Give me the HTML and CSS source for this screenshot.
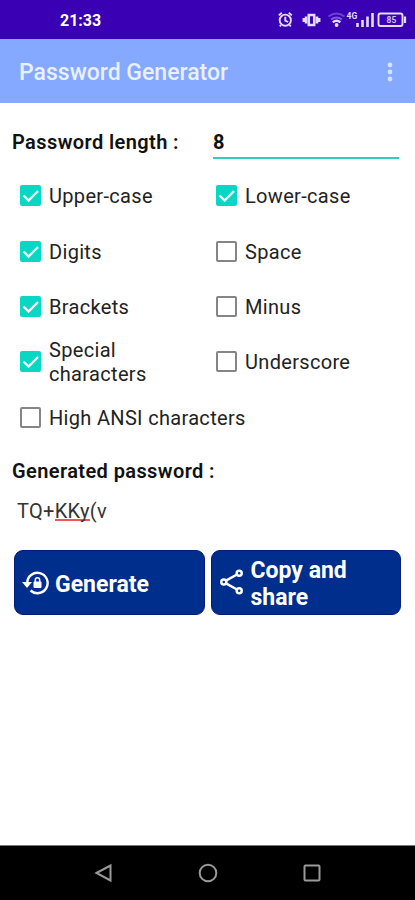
FILE: index.html
```html
<!DOCTYPE html>
<html lang="en">
<head>
<meta charset="utf-8">
<title>Password Generator</title>
<link rel="stylesheet" href="styles.css">
</head>
<body>
<div class="screen">
  <div class="status">
    <span class="clock">21:33</span>
    <svg class="status-icons" width="142" height="24" viewBox="0 0 142 24" fill="none" stroke="#e4dcff" stroke-width="1.9">
      <circle cx="12.300" cy="12.200" r="5.600"/><path d="M12.300 8.800v3.800l2.800 1.400M5.800 7.400l3-2.600M18.800 7.400l-3-2.600M8 17l-1.200 1.400M16.600 17l1.200 1.400"/>
      <path d="M35.800 7h5.400v10h-5.400zM33 8.500v7M44 8.500v7M30.800 10v4M46.200 10v4" stroke-width="2.500"/>
      <path d="M55.500 8.500q8-6 16 0" stroke="#6b42cf"/><path d="M58 11.400q5.500-3.800 11 0" stroke="#7c59d6"/><path d="M59.800 14.200q3.700-2.800 7.600 0" stroke-width="2.400"/><circle cx="63.600" cy="17" r="1.900" fill="#e4dcff" stroke="none"/>
      <text class="network" x="73.500" y="10.500">4G</text>
      <path d="M84.500 19v-4M89.500 19v-7M94.500 19V8.500M99.500 19V5" stroke-width="2.600"/>
      <rect x="105.500" y="5.500" width="24" height="12.500" rx="2"/><path d="M132 8.500v6.500" stroke-width="2.200"/>
      <text class="charge" x="113.500" y="15">85</text>
    </svg>
  </div>
  <header class="appbar">
    <h1>Password Generator</h1>
    <svg width="6" height="20" viewBox="0 0 6 20" fill="#d3e1ff"><circle cx="3" cy="3" r="2.400"/><circle cx="3" cy="10" r="2.400"/><circle cx="3" cy="17" r="2.400"/></svg>
  </header>
  <main>
    <div class="length"><span class="label">Password length :</span><span class="field">8</span></div>
    <div class="options">
      <div class="option"><i class="box on"><svg viewBox="0 0 21 21"><path d="M3.500 10.500l5 5L18 6"/></svg></i><span>Upper-case</span></div>
      <div class="option"><i class="box on"><svg viewBox="0 0 21 21"><path d="M3.500 10.500l5 5L18 6"/></svg></i><span>Lower-case</span></div>
      <div class="option"><i class="box on"><svg viewBox="0 0 21 21"><path d="M3.500 10.500l5 5L18 6"/></svg></i><span>Digits</span></div>
      <div class="option"><i class="box"></i><span>Space</span></div>
      <div class="option"><i class="box on"><svg viewBox="0 0 21 21"><path d="M3.500 10.500l5 5L18 6"/></svg></i><span>Brackets</span></div>
      <div class="option"><i class="box"></i><span>Minus</span></div>
      <div class="option"><i class="box on"><svg viewBox="0 0 21 21"><path d="M3.500 10.500l5 5L18 6"/></svg></i><span>Special<br>characters</span></div>
      <div class="option"><i class="box"></i><span>Underscore</span></div>
      <div class="option wide"><i class="box"></i><span>High ANSI characters</span></div>
    </div>
    <div class="label generated">Generated password :</div>
    <div class="password">TQ+<span class="misspelt">KKy</span>(v</div>
    <div class="actions">
      <div class="button generate">
        <svg width="28" height="26" viewBox="0 0 28 26" fill="none" stroke="#fff" stroke-width="2.400"><path d="M5.200 13A10.200 10.200 0 1 1 8.500 20.500"/><path d="M0 12h10l-5 6z" fill="#fff" stroke="none"/><rect x="11.500" y="11.500" width="8" height="6.500" rx="1" fill="#fff" stroke="none"/><path d="M13.300 12v-2a2.200 2.200 0 0 1 4.400 0v2" stroke-width="1.500"/></svg>
        <span>Generate</span>
      </div>
      <div class="button share">
        <svg width="24" height="28" viewBox="0 0 24 28" fill="none" stroke="#fff" stroke-width="2.500"><path d="M6 12.700L17 6.500M6 15.300l11 6.200"/><circle cx="3.800" cy="14" r="2.500"/><circle cx="19.200" cy="5.300" r="2.500"/><circle cx="19.200" cy="22.700" r="2.500"/></svg>
        <span>Copy and<br>share</span>
      </div>
    </div>
  </main>
  <nav>
    <svg width="20" height="20" viewBox="0 0 20 20"><path d="M2.500 10L16.500 2.500v15z"/></svg>
    <svg width="20" height="20" viewBox="0 0 20 20"><circle cx="10" cy="10" r="8.300"/></svg>
    <svg width="20" height="20" viewBox="0 0 20 20"><rect x="2.500" y="2.500" width="15" height="15" rx="1"/></svg>
  </nav>
</div>
</body>
</html>
```
FILE: styles.css
```css
* { box-sizing: border-box; }
body { margin: 0; font-family: Roboto, sans-serif; background: #fff; }
.screen { width: 415px; height: 900px; display: flex; flex-direction: column; overflow: hidden; }
.status { height: 39px; background: #3a00b3; color: #fff; display: flex; align-items: center; justify-content: space-between; padding: 0 0 0 60px; }
.clock { font-size: 16px; font-weight: 700; line-height: 20px; padding-top: 2px; }
.status-icons { margin-top: 1px; }
.network { font-size: 8.5px; font-weight: 700; fill: #e4dcff; stroke: none; }
.charge { font-size: 8.5px; font-weight: 700; fill: #d2c4f5; stroke: none; }
.appbar { height: 64px; background: #84a9ff; display: flex; align-items: center; justify-content: space-between; padding: 2px 22px 0 19px; }
h1 { margin: 0; font-size: 23px; font-weight: 500; color: #e9f0ff; letter-spacing: 0; }
main { flex: 1; padding: 20px 16px 0 12px; color: #111; }
.length { display: flex; height: 36px; }
.label { font-size: 20px; font-weight: 600; line-height: 38px; letter-spacing: .4px; }
.length .label { width: 201px; }
.field { flex: 1; font-size: 20px; font-weight: 700; line-height: 38px; border-bottom: 2px solid #37cbb9; }
.options { display: grid; grid-template-columns: 196px 1fr; grid-auto-rows: 55.4px; padding: 9px 0 0 8px; }
.option { display: flex; align-items: center; gap: 8px; font-size: 20px; line-height: 24px; font-weight: 400; letter-spacing: .32px; color: #222; }
.option span { padding-top: 1px; }
.wide { grid-column: span 2; }
.box { width: 21px; height: 21px; border: 2px solid #858585; border-radius: 2px; flex: none; }
.box.on { border: 0; background: #08d8c3; }
.box svg { display: block; width: 21px; height: 21px; fill: none; stroke: #fff; stroke-width: 2.4; }
.generated { margin-top: 7px; }
.password { font-size: 20px; line-height: 24px; padding: 9px 0 0 5px; color: #333; letter-spacing: .3px; }
.misspelt { border-bottom: 2px solid #ef5559; display: inline-block; height: 22px; }
.actions { display: flex; gap: 6px; margin: 27px -2px 0 2px; }
.button { width: 191px; height: 65px; border-radius: 9px; background: #002e8d; border: 1px solid #001b7c; color: #fff; display: flex; align-items: center; gap: 5px; padding-left: 7px; font-size: 23px; font-weight: 700; line-height: 27px; }
.button span { padding-top: 3px; }
.generate { padding-top: 1px; }
.share { padding-left: 8px; gap: 7px; }
nav { height: 55px; background: #000; border-top: 1px solid #777; display: flex; justify-content: center; align-items: center; gap: 84px; }
nav svg { fill: none; stroke: #999; stroke-width: 2; }
```
